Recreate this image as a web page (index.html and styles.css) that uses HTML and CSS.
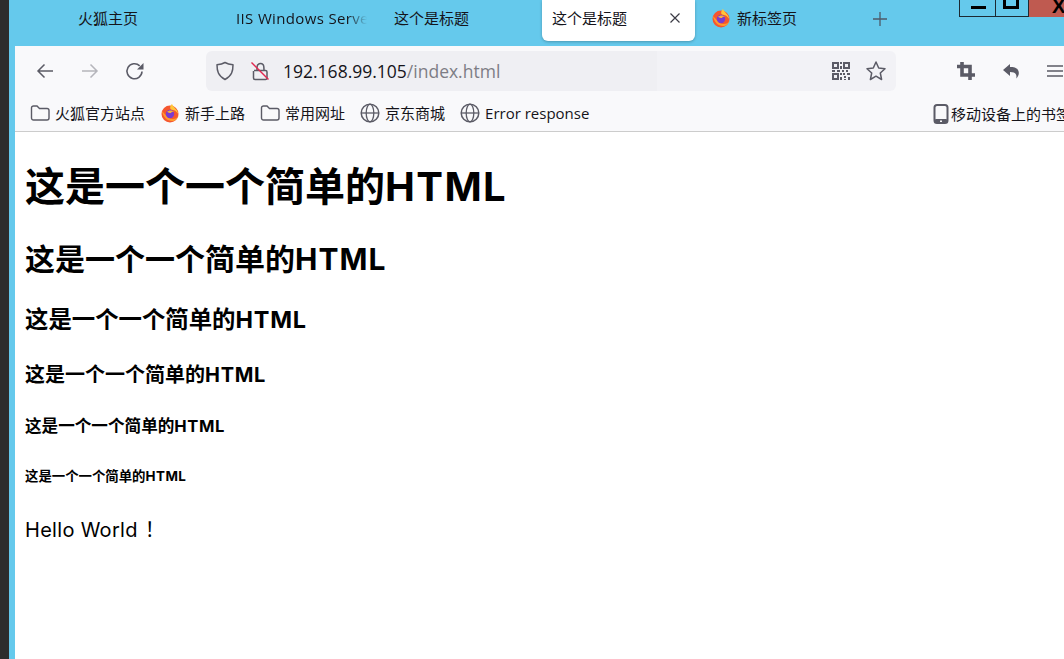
FILE: index.html
```html
<!DOCTYPE html>
<html lang="zh">
<head>
<meta charset="utf-8">
<title>这个是标题</title>
<link rel="stylesheet" href="styles.css">
</head>
<body>
<div class="desk"></div>
<div class="window">
  <div class="tabbar">
    <div class="tab tab-home">火狐主页</div>
    <div class="tab tab-iis"><span class="fade">IIS Windows Server</span></div>
    <div class="tab tab-title">这个是标题</div>
    <div class="tab tab-active"><span>这个是标题</span>
      <svg class="close" width="12" height="12" viewBox="0 0 12 12"><path d="M1.500 1.500l9 9M10.500 1.500l-9 9" stroke="#3b3b45" stroke-width="1.200" fill="none"/></svg>
    </div>
    <div class="tab tab-new">
      <svg width="20" height="20" viewBox="0 0 20 20"><use href="#fox"/></svg>
      <span>新标签页</span>
    </div>
    <svg class="plus" width="16" height="16" viewBox="0 0 16 16"><path d="M8 1v14M1 8h14" stroke="#4d5a68" stroke-width="1.300"/></svg>
  </div>
  <div class="winctl">
    <div class="wc wc-min"><i></i></div>
    <div class="wc wc-max"><i></i></div>
    <div class="wc wc-close">X</div>
  </div>
  <div class="chrome">
    <div class="toolbar">
      <svg class="nav nav-back" width="20" height="20" viewBox="0 0 20 20"><path d="M18 10H3M9.500 3.500L3 10l6.500 6.500" stroke="#5b5b66" stroke-width="1.500" fill="none"/></svg>
      <svg class="nav nav-fwd" width="20" height="20" viewBox="0 0 20 20"><path d="M2 10h15M10.500 3.500L17 10l-6.500 6.500" stroke="#b5b5bb" stroke-width="1.500" fill="none"/></svg>
      <svg class="nav nav-reload" width="20" height="20" viewBox="0 0 20 20"><path d="M17 10.500a7.500 7.500 0 1 1-2.300-5.700" stroke="#5b5b66" stroke-width="1.600" fill="none"/><path d="M18.500 2v6.500H12z" fill="#5b5b66"/></svg>
      <div class="urlbar">
        <svg width="20" height="20" viewBox="0 0 20 20"><path d="M10 1.500c2.500 1.500 5 2 8 2.300 0 6-1 11-8 14.700C3 14.800 2 9.800 2 3.800c3-.3 5.500-.8 8-2.300z" stroke="#5b5b66" stroke-width="1.500" fill="none" stroke-linejoin="round"/></svg>
        <svg class="lock" width="20" height="20" viewBox="0 0 20 20"><path d="M4 9.500h11.500a1.500 1.500 0 0 1 1.500 1.500v6a1.500 1.500 0 0 1-1.500 1.500H5A1.500 1.500 0 0 1 3.500 17v-7M7 9V6a3.500 3.500 0 0 1 6-2.400c1 1 1 2 1 5.400" stroke="#5b5b66" stroke-width="1.500" fill="none"/><path d="M1.500 1.500l17 17" stroke="#e22850" stroke-width="1.500"/></svg>
        <div class="url">192.168.99.105<span class="path">/index.html</span></div>
        <svg class="qr" width="18" height="18" viewBox="0 0 18 18" shape-rendering="crispEdges">
          <path d="M0 0h7v7H0zM11 0h7v7h-7zM0 11h7v7H0z" fill="#5b5b66"/>
          <path d="M2 2h3v3H2zM13 2h3v3h-3zM2 13h3v3H2z" fill="#f0f0f4"/>
          <path d="M8 0h2v2H8zM8 4h2v3H8zM0 8h3v2H0zM5 8h3v2H5zM10 8h2v2h-2zM14 8h2v2h-2zM8 11h2v2H8zM11 11h2v2h-2zM15 11h3v2h-3zM8 15h2v3H8zM12 14h2v2h-2zM16 15h2v3h-2zM12 17h2v1h-2z" fill="#5b5b66"/>
        </svg>
        <svg class="star" width="22" height="22" viewBox="0 0 22 22"><path d="M11 2l2.700 6 6.300.7-4.700 4.300 1.300 6.500L11 16.200l-5.600 3.300 1.300-6.500L2 8.700 8.300 8z" stroke="#5b5b66" stroke-width="1.500" fill="none" stroke-linejoin="round"/></svg>
      </div>
      <div class="tools">
        <svg width="20" height="20" viewBox="0 0 20 20"><path d="M6 1v13h13M1 5.500h13V19" stroke="#5b5b66" stroke-width="3.600" fill="none"/></svg>
        <svg width="20" height="20" viewBox="0 0 20 20"><path d="M9 3L2 9l7 6v-4c3 0 5 .7 6 2.500.5 1 .6 2.500.2 4 2.800-2.500 3.300-6 1.800-8.500C15.500 6.500 12.500 6 9 6z" fill="#5b5b66"/></svg>
        <svg width="18" height="18" viewBox="0 0 18 18"><path d="M1 4h16M1 9h16M1 14h16" stroke="#5b5b66" stroke-width="1.500"/></svg>
      </div>
    </div>
    <div class="bookmarks">
      <div class="bm"><svg width="20" height="20" viewBox="0 0 20 20"><use href="#folder"/></svg>火狐官方站点</div>
      <div class="bm"><svg width="20" height="20" viewBox="0 0 20 20"><use href="#fox"/></svg>新手上路</div>
      <div class="bm"><svg width="20" height="20" viewBox="0 0 20 20"><use href="#folder"/></svg>常用网址</div>
      <div class="bm"><svg width="20" height="20" viewBox="0 0 20 20"><use href="#globe"/></svg>京东商城</div>
      <div class="bm"><svg width="20" height="20" viewBox="0 0 20 20"><use href="#globe"/></svg>Error response</div>
      <div class="bm bm-mobile"><svg width="16" height="20" viewBox="0 0 16 20"><rect x="1.500" y="1" width="13" height="18" rx="2.500" fill="none" stroke="#5b5b66" stroke-width="2"/><rect x="1.500" y="15" width="13" height="4" rx="1.500" fill="#5b5b66"/><rect x="7" y="16.500" width="2" height="1.500" fill="#f9f9fb"/></svg>移动设备上的书签</div>
    </div>
    <main class="page">
      <h1>这是一个一个简单的<span class="lat">HTML</span></h1>
      <h2>这是一个一个简单的<span class="lat">HTML</span></h2>
      <h3>这是一个一个简单的<span class="lat">HTML</span></h3>
      <h4>这是一个一个简单的<span class="lat">HTML</span></h4>
      <h5>这是一个一个简单的<span class="lat">HTML</span></h5>
      <h6>这是一个一个简单的<span class="lat">HTML</span></h6>
      <p>Hello World<span class="bang">！</span></p>
    </main>
  </div>
</div>
<svg class="defs" width="0" height="0">
  <defs>
    <g id="folder"><path d="M1.500 5a2 2 0 0 1 2-2h3.500l2.500 2.500h7.500a2 2 0 0 1 2 2V15a2 2 0 0 1-2 2h-13.500a2 2 0 0 1-2-2z" fill="none" stroke="#5b5b66" stroke-width="1.400"/></g>
    <g id="globe"><circle cx="10" cy="10" r="8.800" fill="none" stroke="#5b5b66" stroke-width="1.500"/><ellipse cx="10" cy="10" rx="3.800" ry="8.800" fill="none" stroke="#5b5b66" stroke-width="1.300"/><path d="M2 10h16" stroke="#5b5b66" stroke-width="1.300"/></g>
    <g id="fox"><circle cx="10" cy="11" r="8.500" fill="#f5562f"/><path d="M12 1c1 3 5 5 6 9 .3 2-2-3-5-3S9 4 12 1z" fill="#ffc53a"/><path d="M2 8c1 6 5 10 10 10 3 0 6-2 6.500-6-1 3-3 4-6 4-3.500 0-6-3-10.500-8z" fill="#ff9a2e"/><circle cx="10" cy="11" r="4.200" fill="#7a3ad0"/><path d="M7 9c2-2 5-2 7 0-1.500-.6-2.500 0-3 1-1.500 0-3-.5-4-1z" fill="#f8b13a"/></g>
  </defs>
</svg>
</body>
</html>
```

FILE: styles.css
```css
html, body {
  margin: 0;
  height: 100%;
  overflow: hidden;
}

body {
  display: flex;
  background: #2d2d2d;
  font-family: "Open Sans", "Noto Sans CJK SC", sans-serif;
  color: #000;
}

.desk {
  width: 9px;
  flex: none;
}

.defs {
  position: absolute;
}

.window {
  position: relative;
  flex: 1;
  min-width: 0;
  background: #65c9ec;
  display: flex;
  flex-direction: column;
}

.tabbar {
  height: 46px;
  flex: none;
  display: flex;
  font-size: 15px;
  color: #15141a;
}

.tab {
  flex: none;
  height: 41px;
  display: flex;
  align-items: center;
  white-space: nowrap;
  padding-bottom: 6px;
  box-sizing: border-box;
}

.tab-home {
  width: 158px;
  padding-left: 69px;
}

.tab-iis {
  width: 227px;
  padding-left: 69px;
}

.fade {
  width: 131px;
  overflow: hidden;
  letter-spacing: 0.35px;
  -webkit-mask-image: linear-gradient(to right, #000 85%, transparent 100%);
  mask-image: linear-gradient(to right, #000 85%, transparent 100%);
}

.tab-title {
  width: 148px;
}

.tab-active {
  width: 153px;
  background: #fff;
  border-radius: 0 0 6px 6px;
  box-shadow: 0 1px 3px rgba(0, 0, 0, 0.25);
  padding-left: 10px;
  padding-right: 14px;
  justify-content: space-between;
}

.tab-new {
  gap: 6px;
  padding-left: 16px;
  width: 177px;
}

.plus {
  margin-top: 11px;
}

.winctl {
  position: absolute;
  top: 0;
  right: 0;
  display: flex;
  height: 17px;
}

.wc {
  height: 17px;
  box-sizing: border-box;
  border-left: 1px solid #1c2a33;
  border-bottom: 1px solid #1c2a33;
  position: relative;
  overflow: hidden;
}

.wc-min {
  width: 36px;
}

.wc-max {
  width: 33px;
}

.wc-min i {
  position: absolute;
  left: 11px;
  top: 6px;
  width: 15px;
  height: 3px;
  background: #000;
}

.wc-max i {
  position: absolute;
  left: 7px;
  top: -3px;
  width: 10px;
  height: 6px;
  border: 3px solid #000;
}

.wc-close {
  width: 36px;
  background: #bf5a50;
  border-bottom: 0;
  font: bold 20px/12px "Liberation Sans", sans-serif;
  padding-left: 23px;
}

.chrome {
  flex: 1;
  margin-left: 6px;
  background: #fff;
  display: flex;
  flex-direction: column;
  min-height: 0;
}

.toolbar {
  height: 50px;
  flex: none;
  background: #f9f9fb;
  display: flex;
  align-items: center;
}

.nav {
  flex: none;
}

.nav-back {
  margin-left: 20px;
}

.nav-fwd {
  margin-left: 25px;
}

.nav-reload {
  margin-left: 25px;
}

.urlbar {
  width: 690px;
  height: 40px;
  margin-left: 61px;
  flex: none;
  background: linear-gradient(to right, #efeff3 451px, #f2f2f6 451px);
  border-radius: 6px;
  box-sizing: border-box;
  display: flex;
  align-items: center;
  padding: 0 9px;
  color: #15141a;
}

.lock {
  margin-left: 15px;
}

.url {
  flex: 1;
  margin-left: 13px;
  font-size: 17.500px;
  white-space: nowrap;
}

.path {
  color: #7d7d85;
}

.qr {
  margin-right: 15px;
}

.tools {
  display: flex;
  align-items: center;
  gap: 25px;
  margin-left: 60px;
  flex: none;
}

.bookmarks {
  position: relative;
  height: 36px;
  flex: none;
  background: #f9f9fb;
  border-bottom: 1px solid #ccc;
  display: flex;
  align-items: center;
  box-sizing: border-box;
  padding: 0 0 2px 15px;
  gap: 15px;
  font-size: 15px;
  color: #15141a;
  white-space: nowrap;
}

.bm {
  display: flex;
  align-items: center;
  gap: 5px;
}

.bm-mobile {
  position: absolute;
  left: 918px;
  top: 7px;
  gap: 2px;
}

.page {
  flex: 1;
  padding-left: 10px;
  overflow: hidden;
  white-space: nowrap;
}

h1, h2, h3, h4, h5, h6, p {
  margin: 0;
  font-family: Inter, "Noto Sans CJK SC", sans-serif;
}

.lat {
  letter-spacing: 0.035em;
}

.bang {
  font-family: "Noto Sans CJK TC", sans-serif;
  margin-left: 7px;
}

h1 {
  font-size: 40px;
  line-height: 54px;
  margin-top: 28px;
}

h2 {
  font-size: 30px;
  line-height: 41px;
  margin-top: 25px;
}

h3 {
  font-size: 23.400px;
  line-height: 32px;
  margin-top: 24px;
}

h4 {
  font-size: 20px;
  line-height: 27px;
  margin-top: 26px;
}

h5 {
  font-size: 16.600px;
  line-height: 23px;
  margin-top: 26px;
}

h6 {
  font-size: 13.400px;
  line-height: 18px;
  margin-top: 29px;
}

p {
  font-size: 20px;
  letter-spacing: 0.3px;
  line-height: 27px;
  margin-top: 30px;
}
```
